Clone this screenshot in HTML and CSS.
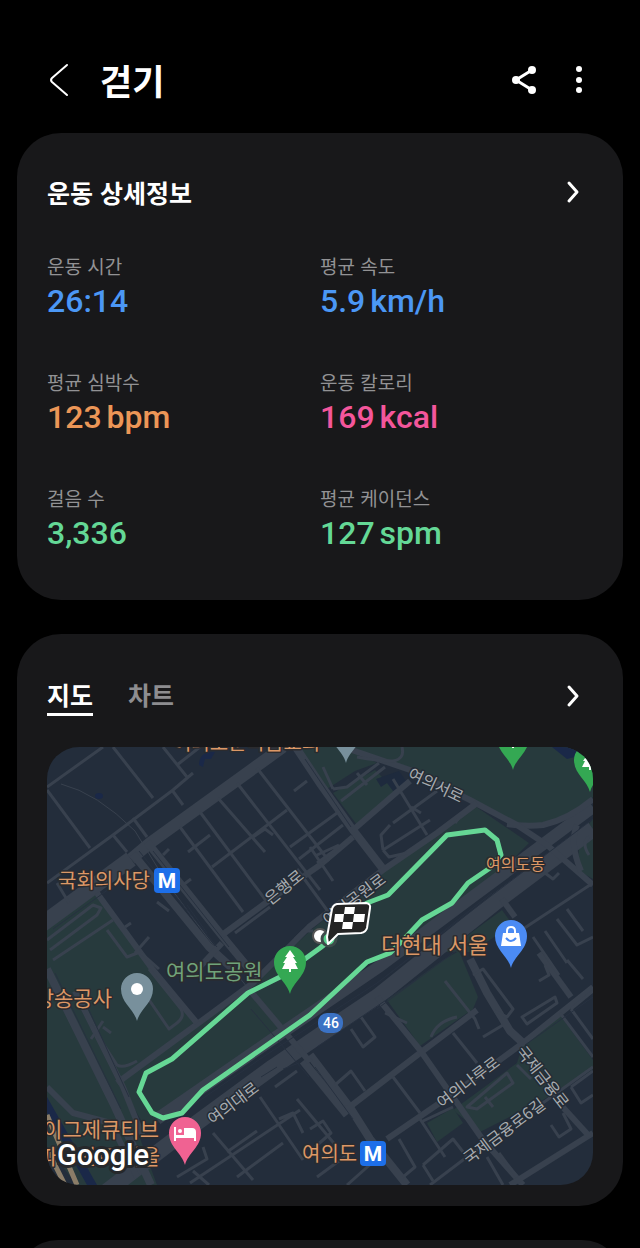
FILE: index.html
```html
<!DOCTYPE html>
<html lang="ko">
  <head>
    <meta charset="utf-8" />
    <meta name="viewport" content="width=device-width, initial-scale=1" />
    <title>걷기</title>
    <link rel="stylesheet" href="styles.css">
  </head>

  <body>
    <!-- 상단 바 -->
    <header class="top-bar">
      <button class="icon-button" aria-label="뒤로">
        <svg width="24" height="36" viewBox="0 0 24 36"><path class="line" d="M19 3 L4 16 Q2 18 4 20 L19 33" /></svg>
      </button>
      <h1>걷기</h1>
      <button class="icon-button" aria-label="공유">
        <svg width="28" height="32" viewBox="0 0 28 32">
          <path class="line thick" d="M21 6 L5 16 L21 26" />
          <circle class="dot" cx="5" cy="16" r="4" />
          <circle class="dot" cx="21" cy="6" r="4" />
          <circle class="dot" cx="21" cy="26" r="4" />
        </svg>
      </button>
      <button class="icon-button" aria-label="더보기">
        <svg width="8" height="32" viewBox="0 0 8 32">
          <circle class="dot" cx="4" cy="5" r="3" />
          <circle class="dot" cx="4" cy="16" r="3" />
          <circle class="dot" cx="4" cy="26" r="3" />
        </svg>
      </button>
    </header>

    <main>
      <!-- 운동 상세정보 -->
      <section class="card details">
        <div class="card-head">
          <h2>운동 상세정보</h2>
          <button class="icon-button" aria-label="운동 상세정보 열기">
            <svg width="16" height="24" viewBox="0 0 16 24"><path class="line" d="M4 3 L12 12 L4 21" /></svg>
          </button>
        </div>
        <dl class="stats">
          <div><dt>운동 시간</dt><dd class="blue">26:14</dd></div>
          <div><dt>평균 속도</dt><dd class="blue">5.9 <span>km/h</span></dd></div>
          <div><dt>평균 심박수</dt><dd class="orange">123 <span>bpm</span></dd></div>
          <div><dt>운동 칼로리</dt><dd class="pink">169 <span>kcal</span></dd></div>
          <div><dt>걸음 수</dt><dd class="green">3,336</dd></div>
          <div><dt>평균 케이던스</dt><dd class="green">127 <span>spm</span></dd></div>
        </dl>
      </section>

      <!-- 지도 / 차트 -->
      <section class="card route">
        <div class="card-head">
          <div class="tabs" role="tablist">
            <button class="tab active" role="tab" aria-selected="true">지도</button>
            <button class="tab" role="tab" aria-selected="false">차트</button>
          </div>
          <button class="icon-button" aria-label="지도 열기">
            <svg width="16" height="24" viewBox="0 0 16 24"><path class="line" d="M4 3 L12 12 L4 21" /></svg>
          </button>
        </div>

        <svg class="map" viewBox="0 0 546 438" role="img" aria-label="여의도 걷기 경로">
          <defs>
            <path id="pin" d="M0 32 C-3 20 -16 14 -16 0 A16 16 0 0 1 16 0 C16 14 3 20 0 32 Z" />
            <g id="tree">
              <path d="M0 -12 L5 -5 H3 L7 1 H5 L8 7 H1 V10 H-1 V7 H-8 L-5 1 H-7 L-3 -5 H-5 Z" />
            </g>
          </defs>

          <!-- 공원 -->
          <g class="park">
            <path d="M73 336 L206 236 L262 185 L336 123 L428 59 L482 96 L445 133 L306 228 L273 258 L100 384 Z" />
            <path d="M0 176 L50 144 L106 223 L150 273 L73 336 L110 438 H30 L0 400 Z" />
            <path d="M300 0 H546 V50 Q530 70 503 75 Q480 78 460 74 L423 52 L363 23 Z" />
            <path d="M252 0 H300 L330 16 L308 24 L280 42 Z" />
            <path d="M286 46 L328 23 L350 45 L310 78 Z" />
            <path d="M340 253 L396 213 L412 204 L431 250 L426 262 L373 299 Z" />
            <path d="M398 205 L455 163 L466 178 L424 205 Z" />
            <path d="M476 296 L513 268 L546 313 V322 L496 353 L433 385 L406 363 L470 316 Z" />
            <path d="M380 376 L406 361 L416 376 L390 395 Z" />
            <path d="M546 72 Q528 90 532 124 L546 132 Z" />
          </g>

          <!-- 물 -->
          <g class="water">
            <path d="M152 18 Q152 4 168 5 L164 12 L158 12 L156 20 Z" />
            <ellipse cx="52" cy="49" rx="4" ry="3" />
            <path d="M505 0 H530 L536 8 L520 12 Z" />
            <path d="M0 350 L50 438 H40 L0 366 Z" />
          </g>
          <path class="block" d="M329 32 L352 24 L362 38 L346 44 L340 36 L334 40 Z" />

          <!-- 도로 -->
          <g class="road w16">
            <path d="M60 444 L140 383 L226 320 L273 288 L330 250 L450 154 L546 82" />
            <path d="M-6 178 L84 112" />
          </g>
          <g class="road w12">
            <path d="M84 112 L103 96 L236 0" />
            <path d="M110 372 L220 296 L333 219 L428 148 L546 60" />
          </g>
          <g class="road w8">
            <path d="M100 95 L176 190 L204 224" />
            <path d="M86 107 L162 200 L186 222" />
            <path d="M0 222 L68 360 L104 438" />
            <path d="M246 -4 L274 38 L306 83 L336 122" />
            <path d="M423 212 L440 246 L463 284 L476 296" />
            <path d="M263 308 L304 362 L323 392 L360 438" />
            <path d="M256 314 L300 368" />
          </g>
          <g class="road w6">
            <path d="M460 77 Q480 80 496 78 Q522 72 546 52" />
            <path d="M296 0 L363 23 L423 53 L470 78 L500 98 L546 138" />
            <path d="M70 336 L206 236 L262 180 L336 123 L390 86 L430 56" />
            <path d="M50 146 L106 223 L150 276" />
            <path d="M28 244 L76 340 L96 390" />
            <path d="M300 362 L373 306 L430 263" />
            <path d="M330 250 L373 303 L436 393 L476 438" />
            <path d="M340 392 L416 340 L476 296 L546 240" />
            <path d="M492 206 L524 250" />
            <path d="M175 188 L224 152 L273 118 L306 90" />
            <path d="M463 438 L546 386" />
            <path d="M200 240 L263 315" />
            <path d="M150 223 L175 196" />
            <path d="M503 346 L543 390" />
            <path d="M0 340 L26 366 L64 376 L90 430" />
            <path d="M455 152 L468 170" />
            <path d="M530 78 Q522 96 534 124" />
            <path d="M306 83 L350 45 L363 34" />
          </g>
          <g class="road w4">
            <path d="M0 136 L66 88 L126 43 L146 26" />
            <path d="M0 40 L56 0 M0 43 L43 101 M66 0 L106 51 M116 0 L140 30 M130 18 L153 0" />
            <path d="M125 43 L136 58 M86 71 L100 90 M66 88 L80 105" />
            <path d="M133 80 L196 165 M153 65 L220 155 M171 51 L218 105 M190 36 L273 143 M210 21 L282 114" />
            <path d="M141 105 L163 88 M165 120 L240 63 M247 44 L260 34 M243 100 L290 66 M252 112 L296 78" />
            <path d="M206 90 L218 82 L226 88 M188 186 L223 160 M116 108 L122 102" />
            <path d="M0 193 L46 158 L54 161 L50 168 L3 203 M6 213 L66 173 M60 183 L80 210 L93 205 L112 222 M78 180 L84 176 M88 206 L102 190" />
            <path d="M10 136 L22 156 M110 155 L122 164 M136 138 L144 132" />
            <path d="M248 192 L256 184 L266 184 M285 170 L250 122" />
            <path d="M294 54 L338 20 M286 42 L300 40 L332 16 M276 20 L286 42 M310 26 L320 38" />
            <path d="M346 32 L380 88 M336 103 L383 73 M346 76 L390 44 M336 103 L342 110 L360 106 M343 78 L334 88 L336 103 M408 76 L414 68 M364 60 L374 66" />
            <path d="M263 100 L286 134 M270 108 L292 98 M306 90 L270 116" />
            <path d="M310 10 Q330 14 346 14 Q358 12 355 0" />
            <path d="M476 182 L546 136 M486 190 L512 228 M498 184 L520 216 M510 172 L530 198 L546 190 M520 162 L536 184 M498 126 L506 132 L512 126" />
            <path d="M542 90 Q534 96 542 108" />
            <path d="M475 270 L508 250 L510 256 L480 277 Z" />
            <path d="M426 228 L436 222 L466 262 L460 270 L448 264" />
            <path d="M398 234 L428 272 L432 282 M384 290 Q390 274 410 270 M406 286 L430 316 M346 330 L373 366 M436 290 L456 278" />
            <path d="M492 234 L502 228 L498 218 M520 213 L536 232 M524 262 L546 244 M524 262 L546 292" />
            <path d="M304 282 L316 300 L328 290 L314 270 M288 338 L304 324 L318 344 M338 266 L360 276" />
            <path d="M383 438 L416 413 L500 353 L546 320 M513 266 L546 310 M373 372 L398 410 M376 374 L406 360" />
            <path d="M420 360 L460 326 L466 336 L430 362 Z M438 350 L446 360 M470 318 L484 332" />
            <path d="M524 340 L546 324 M524 340 L534 356 L546 348 M504 378 L512 390 L524 382 L516 366" />
            <path d="M352 392 L368 420 L356 430 M376 418 L406 392 L420 410 M376 418 L386 434 M440 410 L456 438 M452 406 L470 430" />
            <path d="M263 382 L276 374 L284 386 L268 400 M300 438 L336 406 M270 430 L300 408" />
            <path d="M166 386 L206 433 M213 350 L256 413 M143 436 L253 363 M180 405 L210 384 M232 372 L246 366 L256 386 M228 340 L250 324 M250 352 L290 400 M190 430 L236 396" />
            <path d="M102 222 L134 262 Q138 270 130 276 L122 282 L96 244 M56 274 L44 292 M44 278 L70 318 Q76 322 90 314 M56 280 L64 286" />
            <path d="M146 424 L162 438 M130 430 L160 412 L156 400" />
          </g>
          <g class="thin-road"><path d="M14 37 Q50 46 88 84 L120 136 L160 190 L200 240" /></g>

          <!-- 차선 구분선 -->
          <g class="lane">
            <path d="M120 376 L222 306 L330 236 L440 152 L546 72" />
            <path d="M338 230 L445 146 M270 300 L370 232 M330 262 L420 196" />
            <path d="M92 104 L170 200 M106 104 L182 200 M140 158 L160 186" />
            <path d="M8 226 L74 362 M36 250 L82 350 M258 12 L304 80 M268 320 L306 372" />
            <path d="M204 262 L262 330 M478 298 L546 250 M6 182 L90 122" />
            <path d="M214 330 L230 320 M236 322 L252 316" />
          </g>
          <g class="rail">
            <path d="M0 368 L30 438 M0 402 L18 438" />
          </g>

          <!-- 도로 이름 -->
          <g class="street">
            <text transform="translate(237 140) rotate(-39)" y="6">은행로</text>
            <text transform="translate(389 38) rotate(25)" y="6">여의서로</text>
            <text transform="translate(307 152) rotate(-37)" y="6">여의공원로</text>
            <text transform="translate(186 356) rotate(-37)" y="6">여의대로</text>
            <text transform="translate(421 335) rotate(-37)" y="6">여의나루로</text>
            <text transform="translate(457 384) rotate(-37)" y="6">국제금융로6길</text>
            <text transform="translate(496 330) rotate(52)" y="6">국제금융로</text>
          </g>

          <!-- 걸은 경로 -->
          <path class="track" d="M283 193 L300 170 L320 156 L341 148 L400 88 L438 83 L450 93 L454 108 L443 121 L421 136 L405 156 L375 173 L361 188 L343 206 L320 215 L263 268 L156 343 L135 366 L116 371 L105 366 L92 345 L99 326 L125 312 L201 246 L233 230 L273 201 Z" />

          <!-- 장소 이름 -->
          <g class="place">
            <text x="126" y="3">여의도순복음교회</text>
            <text x="11" y="141">국회의사당</text>
            <text x="255" y="414">여의도</text>
            <text class="large" x="334" y="206">더현대 서울</text>
            <text class="small" x="439" y="123">여의도동</text>
            <text class="medium end" x="65" y="259">방송공사</text>
            <text class="medium end" x="112" y="390">이그제큐티브</text>
            <text class="medium end" x="113" y="417">아파트먼트 서울</text>
            <text class="medium nature" x="119" y="232">여의도공원</text>
          </g>

          <!-- 지하철역, 도로 번호 -->
          <rect class="metro" x="107" y="121" width="26" height="25" rx="4" />
          <text class="metro-text" x="120" y="141">M</text>
          <rect class="metro" x="313" y="394" width="26" height="25" rx="4" />
          <text class="metro-text" x="326" y="414">M</text>
          <rect class="route-no" x="271" y="266" width="25" height="20" rx="9" />
          <text class="route-text" x="284" y="281">46</text>

          <!-- 핀 -->
          <use href="#pin" class="pin-gray" x="299" y="-16" />
          <use href="#pin" class="pin-green" x="466" y="-9" />
          <use href="#tree" class="white" x="466" y="-9" />
          <use href="#pin" class="pin-green" x="543" y="13" />
          <use href="#tree" class="white" x="543" y="13" />
          <use href="#pin" class="pin-green" x="243" y="215" />
          <use href="#tree" class="white" x="243" y="215" />
          <use href="#pin" class="pin-gray" x="90" y="242" />
          <circle class="white" cx="90" cy="242" r="6" />
          <use href="#pin" class="pin-pink" x="138" y="386" />
          <path class="white" d="M127 380 h2 v8 h8 v-7 h8 q4 0 4 4 v9 h-2 v-3 h-18 v3 h-2 Z" />
          <circle class="white" cx="133" cy="384" r="2" />
          <use href="#pin" class="pin-blue" x="464" y="189" />
          <path class="white" d="M456 186 H472 L474 199 H454 Z" />
          <path class="bag-handle" d="M460 187 V184 Q460 180 464 180 Q468 180 468 184 V187" />
          <path class="bag-smile" d="M459 191 Q464 197 469 191" />

          <!-- 출발점과 도착 깃발 -->
          <circle class="start" cx="273" cy="189" r="7" />
          <circle class="finish" cx="282" cy="192" r="7" />
          <path class="flag" d="M290 157 L319 156 Q324 157 323 161 L320 181 Q319 185 314 186 L291 187 L281 197 L280 190 L285 162 Q286 158 290 157 Z" />
          <path class="white" d="M298 160 h10 l-1 7 h-10 Z M288 167 h9 l-1 8 h-9 Z M307 167 h11 l-1 8 h-11 Z M296 175 h10 l-1 7 h-10 Z" />

          <text class="logo" x="10" y="418">Google</text>
        </svg>
      </section>

      <!-- 다음 카드 -->
      <div class="next">
        <section class="card"></section>
      </div>
    </main>
  </body>
</html>
```

FILE: styles.css
```css
/* 기본 */
* {
  box-sizing: border-box;
}

body {
  margin: 0;
  min-height: 100vh;
  display: flex;
  flex-direction: column;
  background-color: #000;
  color: #fff;
  font-family: "Noto Sans CJK KR", sans-serif;
}

h1,
h2,
dl,
dd {
  margin: 0;
}

button {
  padding: 0;
  border: none;
  background: none;
  color: inherit;
  font-family: inherit;
  cursor: pointer;
}

.icon-button {
  display: flex;
}

.line {
  fill: none;
  stroke: #fff;
  stroke-width: 2;
  stroke-linecap: round;
  stroke-linejoin: round;
}
.card .line,
.line.thick {
  stroke-width: 3;
}
.dot {
  fill: #fff;
}

/* 상단 바 */
.top-bar {
  display: flex;
  align-items: center;
  padding: 54px 57px 27px 48px;
}
.top-bar h1 {
  flex: 1;
  margin-left: 28px;
  font-size: 35px;
  line-height: 52px;
  font-weight: 700;
}
.top-bar .icon-button + .icon-button {
  margin-left: 36px;
}

/* 카드 */
main {
  flex: 1;
  display: flex;
  flex-direction: column;
  gap: 34px;
  padding: 0 17px;
}

.card {
  padding: 41px 30px;
  border-radius: 44px;
  background-color: #18181a;
}

.card-head {
  display: flex;
  align-items: center;
  justify-content: space-between;
  padding-right: 12px;
}
.card-head h2 {
  font-size: 25px;
  line-height: 36px;
  font-weight: 700;
}

/* 운동 수치 */
.details {
  padding-bottom: 46px;
}
.stats {
  display: grid;
  grid-template-columns: 1fr 1fr;
  row-gap: 46px;
  margin-top: 42px;
}
.stats dt {
  color: #929294;
  font-size: 19px;
  line-height: 28px;
}
.stats dd {
  display: flex;
  gap: 5px;
  font-family: Roboto, sans-serif;
  font-size: 32px;
  line-height: 42px;
  font-weight: 500;
}
.blue {
  color: #4b97f5;
}
.orange {
  color: #ec9657;
}
.pink {
  color: #f4569b;
}
.green {
  color: #64d896;
}

/* 탭 */
.route {
  padding-bottom: 21px;
}
.tabs {
  display: flex;
  gap: 35px;
}
.tab {
  border-bottom: 3px solid transparent;
  color: #8d8d90;
  font-size: 25px;
  line-height: 38px;
  font-weight: 700;
}
.tab.active {
  border-color: #fff;
  color: #fff;
}

/* 지도 */
.map {
  display: block;
  width: 100%;
  margin-top: 31px;
  border-radius: 32px;
  background-color: #232d3b;
}
.park {
  fill: #273a3d;
}
.water {
  fill: #1a2848;
}
.block {
  fill: #1e2a3d;
}
.road,
.thin-road,
.lane,
.rail {
  fill: none;
  stroke: #38414e;
  stroke-linejoin: round;
}
.w16 {
  stroke-width: 16;
}
.w12 {
  stroke-width: 12;
}
.w8 {
  stroke-width: 8;
}
.w6 {
  stroke-width: 6;
}
.w4 {
  stroke-width: 3;
}
.thin-road {
  stroke-width: 1;
}
.lane {
  stroke: #273140;
  stroke-width: 1;
}
.rail {
  stroke: #8b7d68;
  stroke-width: 5;
}
.track {
  fill: none;
  stroke: #66d795;
  stroke-width: 5;
  stroke-linejoin: round;
}

.map text {
  paint-order: stroke;
  stroke: #242c36;
  stroke-width: 3;
  stroke-linejoin: round;
}
.street {
  fill: #a9acb1;
  font-size: 16px;
  text-anchor: middle;
}
.place {
  fill: #dc9866;
  font-size: 20px;
}
.map .place text {
  stroke: #2b2b2e;
}
.place .small {
  font-size: 16px;
}
.place .medium {
  font-size: 21px;
}
.place .large {
  font-size: 22px;
}
.place .end {
  text-anchor: end;
}
.place .nature {
  fill: #70a37a;
}

.metro {
  fill: #1d6fe9;
}
.map .metro-text,
.map .route-text {
  fill: #fff;
  stroke: none;
  text-anchor: middle;
  font-family: Roboto, sans-serif;
  font-size: 21px;
  font-weight: 700;
}
.route-no {
  fill: #3b72c4;
}
.map .route-text {
  font-size: 14px;
  font-weight: 500;
}

.white {
  fill: #fff;
}
.pin-gray {
  fill: #78909c;
}
.pin-green {
  fill: #34a853;
}
.pin-pink {
  fill: #f06292;
}
.pin-blue {
  fill: #4b8bf4;
}
.bag-handle,
.bag-smile {
  fill: none;
  stroke: #fff;
  stroke-width: 2;
}
.bag-smile {
  stroke: #4b8bf4;
}
.start {
  fill: #fff;
  stroke: #555;
  stroke-width: 2;
}
.finish {
  fill: #55cf8b;
  stroke: #3d4a4a;
  stroke-width: 3;
}
.flag {
  fill: #242424;
  stroke: #fff;
  stroke-width: 2;
  stroke-linejoin: round;
}
.map .logo {
  fill: #fff;
  stroke: #26282b;
  stroke-width: 6;
  font-family: Roboto, sans-serif;
  font-size: 29px;
  font-weight: 500;
}

/* 화면 아래로 이어지는 카드 */
.next {
  flex: 1 1 0;
  min-height: 8px;
  overflow: hidden;
}
```
